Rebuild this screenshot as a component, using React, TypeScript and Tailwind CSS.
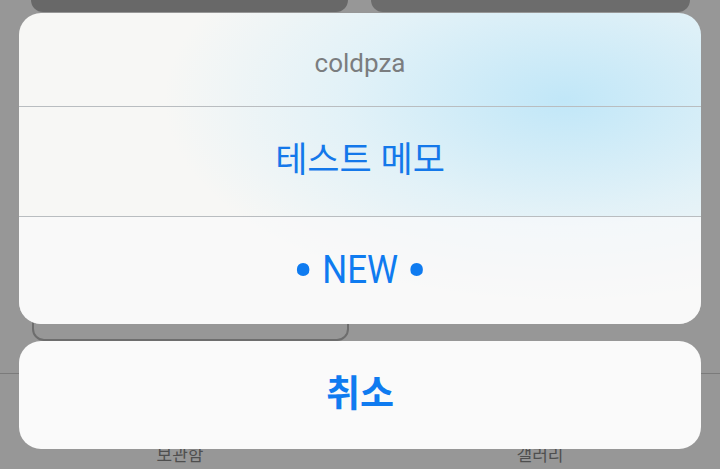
import React from "react";

export default function App() {
  const latin = "font-['Roboto','Noto_Sans_CJK_KR',sans-serif]";
  return (
    <div className={`relative w-[720px] h-[469px] overflow-hidden bg-[#979797] ${latin}`}>
      {/* page underneath the dimming */}
      <div className="flex flex-col">
        <div className="flex gap-[23px] pl-[31px]">
          <div className="w-[317px] h-[12px] rounded-b-[12px] bg-[#686868]" />
          <div className="w-[319px] h-[12px] rounded-b-[12px] bg-[#6c6c6c]" />
        </div>
        <div className="ml-[32px] mt-[188px] w-[317px] h-[141px] rounded-[12px] border-2 border-[#6d6d6d]" />
        <div className="mt-[32px] h-px bg-[#7b7b7b]" />
        <div className="mt-[69px] flex text-[17px] leading-[24px] text-[#4f4f4f]">
          <div className="w-1/2 text-center">보관함</div>
          <div className="w-1/2 text-center">갤러리</div>
        </div>
      </div>

      {/* action sheet overlay */}
      <div className="absolute inset-0 flex flex-col px-[19px] pt-[13px] gap-[17px]">
        <div className="h-[311px] rounded-[22px] overflow-hidden flex flex-col bg-[#f7f7f5] bg-[radial-gradient(ellipse_400px_200px_at_80%_28%,rgba(190,230,248,0.95),rgba(205,236,250,0.5)_55%,rgba(247,247,245,0)_100%)]">
          <div className="h-[93px] pt-[8px] flex items-center justify-center text-[26px] text-[#7b7d7f]">
            coldpza
          </div>
          <div className="h-px bg-[#b9bdc0]" />
          <div className="h-[109px] flex items-center justify-center text-[35px] text-[#1478ea]">
            테스트 메모
          </div>
          <div className="h-px bg-[#b9bdc0]" />
          <div className="h-[107px] flex items-center justify-center text-[38px] text-[#0f7bf0] bg-[#f9fafb]/70">
            <span className="text-[62px] leading-[0]">•</span>
            <span className="mx-[5px] scale-x-[0.92] inline-block">NEW</span>
            <span className="text-[62px] leading-[0]">•</span>
          </div>
        </div>
        <div className="h-[108px] rounded-[22px] bg-[#fafafa] flex items-center justify-center text-[37px] font-bold text-[#0f7bf0]">
          취소
        </div>
      </div>
    </div>
  );
}
